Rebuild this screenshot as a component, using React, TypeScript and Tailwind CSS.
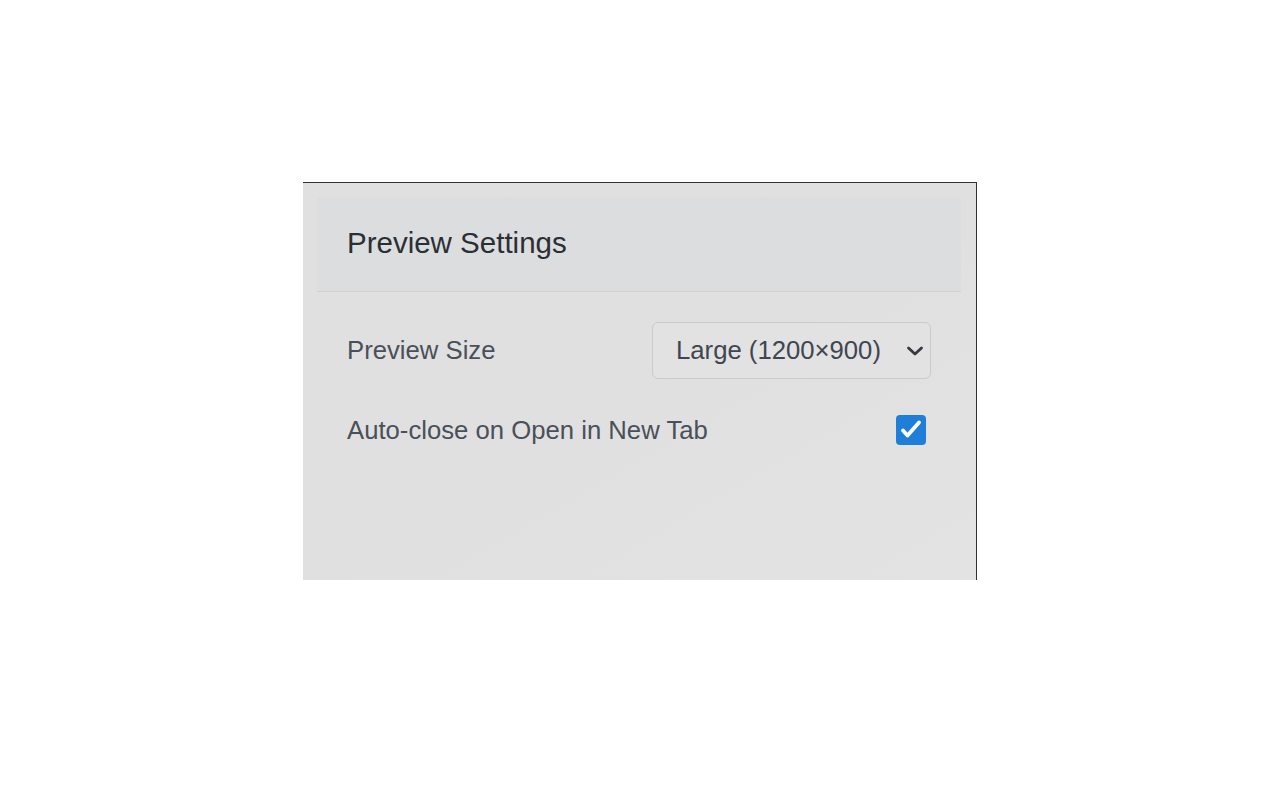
import React from 'react';

export default function App() {
    return (
        <main className="min-h-screen bg-white pt-[182px]" style={{ fontFamily: '"Liberation Sans", Arial, sans-serif' }}>
            {/* ===== SETTINGS PANEL ===== */}
            <section className="mx-auto w-[674px] h-[398px] border-t border-r border-[#2f3235] bg-gradient-to-br from-[#e0e0e0] via-[#e0e0e1] to-[#e3e3e3] pt-[14px] pl-[14px] pr-[15px]">
                {/* Header */}
                <div className="h-[95px] bg-[#dcdddf] border-b border-[#d0d1d3] flex items-center px-[30px] pb-[2px]">
                    <h1 className="text-[29.5px] leading-none text-[#2b2f34]">Preview Settings</h1>
                </div>

                {/* Rows */}
                <div className="px-[30px] pt-[30px] flex flex-col">
                    <div className="flex items-center justify-between h-[57px]">
                        <label className="text-[25.7px] text-[#4a5059]">Preview Size</label>
                        <div className="relative w-[279px] h-[57px]">
                            <select
                                defaultValue="large"
                                className="appearance-none w-full h-full rounded-[6px] border border-[#c9cbcf] bg-[#e2e2e3] pl-[23px] pr-[40px] text-[25.7px] text-[#3f4650] outline-none"
                                style={{ fontFamily: '"Liberation Sans", Arial, sans-serif' }}
                            >
                                <option value="small">Small (800×600)</option>
                                <option value="medium">Medium (1000×750)</option>
                                <option value="large">Large (1200×900)</option>
                            </select>
                            <svg
                                className="absolute right-[7px] top-1/2 -translate-y-1/2 w-[18px] h-[18px] pointer-events-none"
                                viewBox="0 0 18 18"
                                fill="none"
                                stroke="#343a40"
                                strokeWidth="2.8"
                                strokeLinecap="round"
                                strokeLinejoin="round"
                            >
                                <path d="M2.5 6l6.5 6 6.5-6" />
                            </svg>
                        </div>
                    </div>

                    <div className="flex items-center justify-between mt-[36px] h-[30px]">
                        <label className="text-[25.7px] text-[#4a5059]">Auto-close on Open in New Tab</label>
                        <span className="mr-[5px] w-[30px] h-[30px] rounded-[4px] bg-[#1f7fd8]">
                            <svg className="w-[30px] h-[30px]" viewBox="0 0 30 30" fill="none" stroke="white" strokeWidth="3.8" strokeLinecap="round" strokeLinejoin="round">
                                <path d="M7 15.5l4.5 5 11.5-13" />
                            </svg>
                        </span>
                    </div>
                </div>
            </section>
        </main>
    );
}
